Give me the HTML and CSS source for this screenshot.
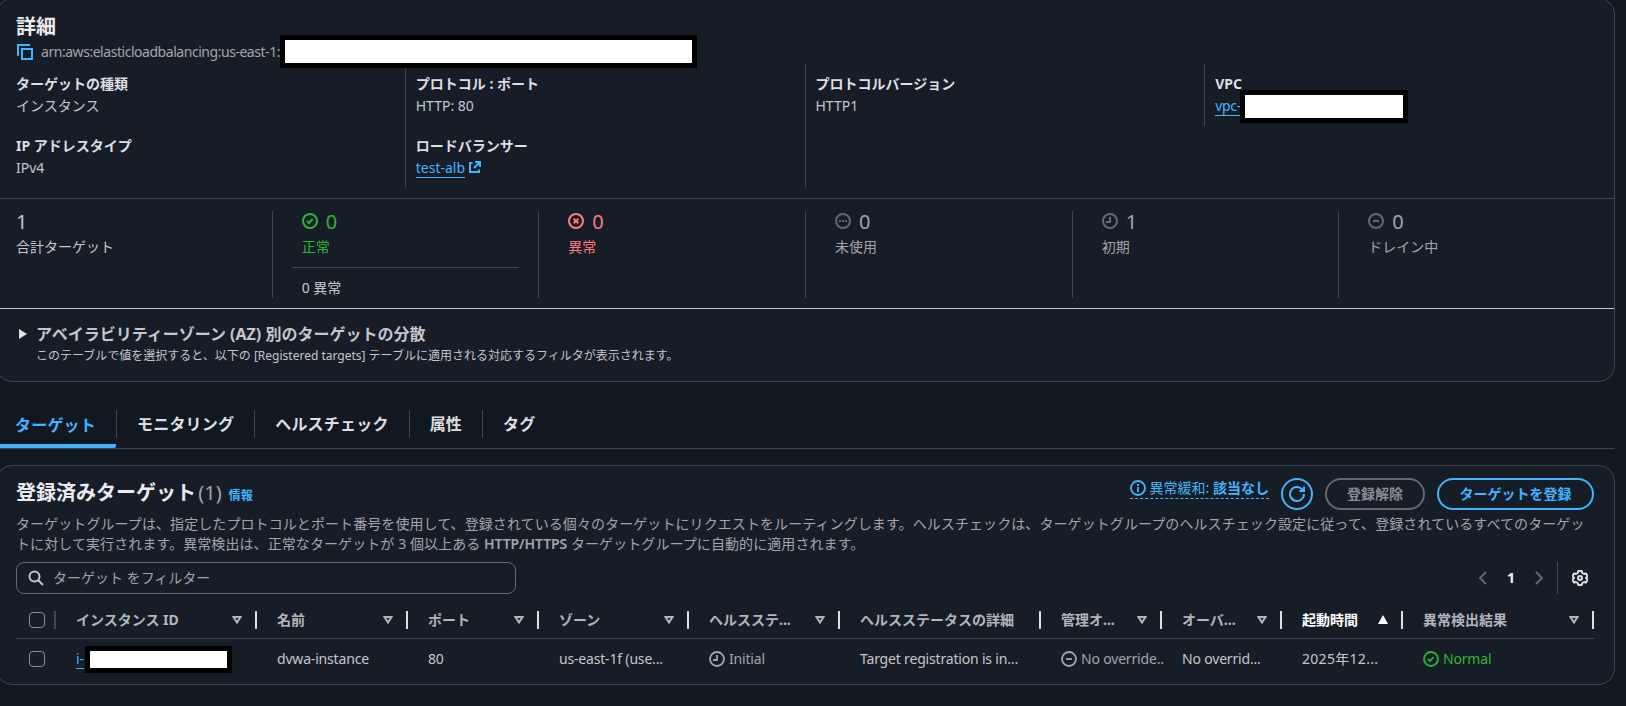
FILE: index.html
```html
<!DOCTYPE html>
<html lang="ja">
<head>
    <meta charset="UTF-8">
    <title>ターゲットグループ</title>
    <link rel="stylesheet" href="styles.css">
</head>
<body>
    <svg class="sprite" width="0" height="0">
        <symbol id="ok" viewBox="0 0 16 16"><circle cx="8" cy="8" r="7"/><path d="M5 8l2 2 3.6-4"/></symbol>
        <symbol id="error" viewBox="0 0 16 16"><circle cx="8" cy="8" r="7"/><path d="M5.7 5.7l4.6 4.6M10.3 5.7l-4.6 4.6"/></symbol>
        <symbol id="unused" viewBox="0 0 16 16"><circle cx="8" cy="8" r="7"/><path d="M4 8h2M7 8h2M10 8h2"/></symbol>
        <symbol id="clock" viewBox="0 0 16 16"><circle cx="8" cy="8" r="7"/><path d="M8 4v5H4"/></symbol>
        <symbol id="minus" viewBox="0 0 16 16"><circle cx="8" cy="8" r="7"/><path d="M5 8h6"/></symbol>
        <symbol id="sort" viewBox="0 0 10 8"><path d="M1.5 1h7L5 6.5z"/></symbol>
    </svg>

    <section class="card details">
        <h2>詳細</h2>
        <div class="arn">
            <svg class="icon" viewBox="0 0 16 16"><path d="M1 12V1h12M5 5h10v10H5z"/></svg>
            <span class="arn-text">arn:aws:elasticloadbalancing:us-east-1:</span>
            <div class="mask mask-arn"></div>
        </div>

        <div class="info-grid">
            <div class="info-col">
                <dl><dt>ターゲットの種類</dt><dd>インスタンス</dd></dl>
                <dl><dt>IP アドレスタイプ</dt><dd>IPv4</dd></dl>
            </div>
            <div class="info-col">
                <dl><dt>プロトコル : ポート</dt><dd>HTTP: 80</dd></dl>
                <dl>
                    <dt>ロードバランサー</dt>
                    <dd><a class="link" href="#">test-alb</a><svg class="ext" viewBox="0 0 12 12"><path d="M3.5 2H1v9h9V8.500M6 1h5v5M11 1L5 7"/></svg></dd>
                </dl>
            </div>
            <div class="info-col">
                <dl><dt>プロトコルバージョン</dt><dd>HTTP1</dd></dl>
            </div>
            <div class="info-col short">
                <dl><dt>VPC</dt><dd class="masked"><a class="link" href="#">vpc-</a><span class="mask mask-vpc"></span></dd></dl>
            </div>
        </div>

        <div class="stats">
            <div class="stat">
                <div class="num">1</div>
                <div class="label">合計ターゲット</div>
            </div>
            <div class="stat green">
                <div class="num"><svg class="icon"><use href="#ok"/></svg>0</div>
                <div class="label">正常</div>
                <div class="sub">0 異常</div>
            </div>
            <div class="stat red">
                <div class="num"><svg class="icon"><use href="#error"/></svg>0</div>
                <div class="label">異常</div>
            </div>
            <div class="stat gray">
                <div class="num"><svg class="icon"><use href="#unused"/></svg>0</div>
                <div class="label">未使用</div>
            </div>
            <div class="stat gray">
                <div class="num"><svg class="icon"><use href="#clock"/></svg>1</div>
                <div class="label">初期</div>
            </div>
            <div class="stat gray">
                <div class="num"><svg class="icon"><use href="#minus"/></svg>0</div>
                <div class="label">ドレイン中</div>
            </div>
        </div>

        <div class="az">
            <div class="az-arrow"></div>
            <div>
                <h3>アベイラビリティーゾーン (AZ) 別のターゲットの分散</h3>
                <p>このテーブルで値を選択すると、以下の [Registered targets] テーブルに適用される対応するフィルタが表示されます。</p>
            </div>
        </div>
    </section>

    <nav class="tabs">
        <a class="tab active" href="#">ターゲット</a>
        <a class="tab" href="#">モニタリング</a>
        <a class="tab" href="#">ヘルスチェック</a>
        <a class="tab" href="#">属性</a>
        <a class="tab" href="#">タグ</a>
    </nav>

    <section class="card targets">
        <div class="head">
            <h2>登録済みターゲット <span class="count">(1)</span><a class="info" href="#">情報</a></h2>
            <div class="actions">
                <div class="mitigation">
                    <svg class="icon" viewBox="0 0 16 16"><circle cx="8" cy="8" r="7"/><path d="M8 7v5M8 4v2"/></svg>
                    <span>異常緩和: <b>該当なし</b></span>
                </div>
                <button class="btn round"><svg class="icon" viewBox="0 0 16 16"><path d="M15 8a7 7 0 1 1-2.200-5.100L14.500 5M15 .5V5h-4.500"/></svg></button>
                <button class="btn disabled">登録解除</button>
                <button class="btn register">ターゲットを登録</button>
            </div>
        </div>
        <p class="desc">ターゲットグループは、指定したプロトコルとポート番号を使用して、登録されている個々のターゲットにリクエストをルーティングします。ヘルスチェックは、ターゲットグループのヘルスチェック設定に従って、登録されているすべてのターゲッ<br>トに対して実行されます。異常検出は、正常なターゲットが 3 個以上ある <span class="http">HTTP/HTTPS</span> ターゲットグループに自動的に適用されます。</p>

        <div class="tools">
            <div class="search">
                <svg class="icon" viewBox="0 0 16 16"><circle cx="6.500" cy="6.500" r="5"/><path d="M10 10l5 5"/></svg>
                <span>ターゲット をフィルター</span>
            </div>
            <div class="pager">
                <svg class="icon dim" viewBox="0 0 16 16"><path d="M11 2L5 8l6 6"/></svg>
                <b>1</b>
                <svg class="icon dim" viewBox="0 0 16 16"><path d="M5 2l6 6-6 6"/></svg>
                <div class="gear">
                    <svg class="icon" viewBox="0 0 16 16"><path d="M6.300 1h3.400l.6 2 1.700 1 2-.5L15.500 6.300 14 8l1.500 1.700L14 12.500l-2-.5-1.700 1-.6 2H6.300l-.6-2L4 12l-2 .5L.5 9.700 2 8 .5 6.300 2 3.500 4 4l1.700-1z"/><circle cx="8" cy="8" r="2"/></svg>
                </div>
            </div>
        </div>

        <div class="table">
            <div class="row header">
                <div class="cell check"><i class="box"></i></div>
                <div class="cell">インスタンス ID<svg class="sort"><use href="#sort"/></svg></div>
                <div class="cell">名前<svg class="sort"><use href="#sort"/></svg></div>
                <div class="cell">ポート<svg class="sort"><use href="#sort"/></svg></div>
                <div class="cell">ゾーン<svg class="sort"><use href="#sort"/></svg></div>
                <div class="cell">ヘルスステ...<svg class="sort"><use href="#sort"/></svg></div>
                <div class="cell">ヘルスステータスの詳細</div>
                <div class="cell">管理オ...<svg class="sort"><use href="#sort"/></svg></div>
                <div class="cell">オーバ...<svg class="sort"><use href="#sort"/></svg></div>
                <div class="cell sorted">起動時間<i class="asc"></i></div>
                <div class="cell">異常検出結果<svg class="sort"><use href="#sort"/></svg></div>
            </div>
            <div class="row">
                <div class="cell check"><i class="box"></i></div>
                <div class="cell masked"><a class="link" href="#">i-</a><span class="mask mask-id"></span></div>
                <div class="cell">dvwa-instance</div>
                <div class="cell">80</div>
                <div class="cell">us-east-1f (use...</div>
                <div class="cell muted"><svg class="icon"><use href="#clock"/></svg>Initial</div>
                <div class="cell">Target registration is in...</div>
                <div class="cell muted"><svg class="icon"><use href="#minus"/></svg>No override..</div>
                <div class="cell">No overrid...</div>
                <div class="cell date">2025年12...</div>
                <div class="cell green"><svg class="icon"><use href="#ok"/></svg>Normal</div>
            </div>
        </div>
    </section>
</body>
</html>
```
FILE: styles.css
```css
* {
    box-sizing: border-box;
}
body {
    margin: 0;
    height: 706px;
    overflow: hidden;
    background: #12181f;
    color: #c6c6cd;
    font-family: "Noto Sans", "Noto Sans CJK JP", sans-serif;
    font-size: 14px;
    line-height: 20px;
}
h2, h3, p, dl, dd {
    margin: 0;
}
a {
    text-decoration: none;
}
.sprite {
    display: block;
    height: 0;
}
.icon {
    width: 16px;
    height: 16px;
    flex: none;
    fill: none;
    stroke: currentColor;
    stroke-width: 2;
}
.card {
    width: 1619px;
    margin-left: -4px;
    background: #161d26;
    border: 1px solid #424650;
    border-radius: 16px;
}
.details {
    height: 384px;
    margin-top: -2px;
}
h2 {
    font-size: 20px;
    line-height: 24px;
    color: #ebebf0;
}

/* details */
.details h2 {
    padding: 16px 19px 0;
}
.arn {
    position: relative;
    display: flex;
    align-items: center;
    gap: 8px;
    height: 24px;
    margin: 1px 20px 0;
    color: #a4a4ad;
}
.arn-text {
    letter-spacing: -0.46px;
}
.arn .icon {
    color: #42b4ff;
}
.mask {
    position: absolute;
    background: #fff;
    border: 5px solid #000;
    z-index: 1;
}
.mask-arn {
    left: 263px;
    top: -5px;
    width: 417px;
    height: 33px;
}
.mask-vpc {
    left: 25px;
    top: -5px;
    width: 168px;
    height: 33px;
}
.mask-id {
    left: 29px;
    top: 7px;
    width: 147px;
    height: 27px;
}
.masked {
    position: relative;
}
.info-grid {
    display: grid;
    grid-template-columns: repeat(4, 1fr);
    align-items: start;
    margin: 0 10px 0 8px;
}
.info-col {
    height: 124px;
    padding-left: 10px;
}
.info-col:first-child {
    padding-left: 11px;
}
.info-col + .info-col {
    border-left: 1px solid #424650;
}
.info-col.short {
    height: 62px;
}
dl {
    height: 62px;
    padding-top: 9px;
    line-height: 22px;
}
dt {
    font-weight: bold;
    color: #dedee3;
}
.link {
    color: #42b4ff;
    border-bottom: 1px solid #42b4ff;
    line-height: 18px;
}
dd .link {
    display: inline-block;
}
.masked .link {
    letter-spacing: -0.3px;
}
.ext {
    width: 12px;
    height: 12px;
    margin-left: 4px;
    fill: none;
    stroke: #42b4ff;
    stroke-width: 2;
}
.stats {
    display: grid;
    grid-template-columns: repeat(6, 1fr);
    height: 110px;
    margin-top: 10px;
    padding: 12px 9px 10px 8px;
    border-top: 1px solid #424650;
}
.stat {
    padding: 0 11px;
}
.stat + .stat {
    padding: 0 19px;
    border-left: 1px solid #424650;
}
.num {
    display: flex;
    align-items: center;
    gap: 8px;
    height: 22px;
    font-size: 20px;
}
.num .icon {
    margin-top: -2px;
}
.label {
    height: 27px;
    line-height: 27px;
}
.stat + .stat .num, .stat + .stat .label {
    padding-left: 10px;
}
.sub {
    margin-top: 7px;
    padding: 10px 10px 0;
    border-top: 1px solid #424650;
    color: #c6c6cd;
}
.green { color: #2bb534; }
.red { color: #ff7a7a; }
.gray { color: #a4a4ad; }
.gray .icon { color: #656871; }
.az {
    display: flex;
    height: 73px;
    padding: 14px 19px 0 22px;
    border-top: 1px solid #c6c6cd;
}
.az-arrow {
    margin: 6px 9px 0 0;
    width: 8px;
    height: 10px;
    background: #dedee3;
    clip-path: polygon(0 0, 100% 50%, 0 100%);
}
h3 {
    font-size: 16px;
    line-height: 23px;
}
.az p {
    font-size: 12px;
}

/* tabs */
.tabs {
    display: flex;
    align-items: center;
    width: 1615px;
    height: 67px;
    padding-top: 18px;
    border-bottom: 1px solid #424650;
}
.tab {
    padding: 0 20px;
    border-left: 1px solid #424650;
    font-size: 16px;
    font-weight: bold;
    line-height: 28px;
    letter-spacing: 0.2px;
    color: #dedee3;
}
.tab.active {
    align-self: flex-end;
    height: 37px;
    padding-left: 15px;
    border-left: 0;
    border-bottom: 4px solid #42b4ff;
    border-radius: 0 0 2px 0;
    color: #42b4ff;
}

/* registered targets */
.targets {
    height: 220px;
    margin-top: 16px;
    padding: 12px 20px 0 19px;
}
.head {
    display: flex;
    justify-content: space-between;
    height: 36px;
}
.head h2 {
    padding-top: 3px;
}
.count {
    margin-left: -3px;
    font-weight: normal;
    color: #a4a4ad;
}
.info {
    margin-left: 7px;
    font-size: 12px;
    color: #42b4ff;
}
.actions {
    display: flex;
    gap: 12px;
}
.mitigation {
    display: flex;
    align-items: center;
    gap: 4px;
    height: 21px;
    border-bottom: 1px dashed #42b4ff;
    color: #42b4ff;
}
.mitigation .icon {
    stroke-width: 1.8;
}
.btn {
    height: 32px;
    padding: 0 20px;
    background: none;
    border: 2px solid #42b4ff;
    border-radius: 16px;
    color: #42b4ff;
    font: bold 14px/20px "Noto Sans", "Noto Sans CJK JP", sans-serif;
}
.btn.round {
    display: flex;
    align-items: center;
    justify-content: center;
    width: 32px;
    padding: 0;
}
.btn.register {
    width: 157px;
    padding: 0 19px;
}
.btn.disabled {
    border-color: #656871;
    color: #8c8c94;
}
.desc {
    letter-spacing: 0.083px;
    white-space: nowrap;
    color: #a4a4ad;
}
.http {
    font-weight: 600;
    letter-spacing: -0.1px;
}
.tools {
    display: flex;
    justify-content: space-between;
    height: 32px;
    margin-top: 8px;
}
.search {
    display: flex;
    align-items: center;
    gap: 9px;
    width: 500px;
    padding-left: 11px;
    border: 1px solid #656871;
    border-radius: 8px;
    color: #a4a4ad;
}
.search .icon {
    color: #c6c6cd;
}
.pager {
    display: flex;
    align-items: center;
    color: #fff;
}
.pager b {
    width: 40px;
    text-align: center;
}
.dim {
    color: #656871;
}
.gear {
    display: flex;
    align-items: center;
    height: 32px;
    margin-left: 10px;
    padding: 0 6px 0 14px;
    border-left: 1px solid #424650;
    color: #dedee3;
}
.gear .icon {
    stroke-linejoin: round;
}
.row {
    display: grid;
    grid-template-columns: 40px 201px 151px 131px 150px 151px 201px 121px 120px 121px 191px;
    height: 40px;
    letter-spacing: -0.18px;
}
.header {
    height: 45px;
    padding-top: 7px;
    border-bottom: 1px solid #424650;
    font-weight: bold;
    letter-spacing: 0;
    color: #b4b4bb;
}
.cell {
    display: flex;
    align-items: center;
    padding-left: 20px;
    white-space: nowrap;
}
.header .cell {
    position: relative;
    justify-content: space-between;
    padding-right: 15px;
}
.header .cell::after {
    content: "";
    position: absolute;
    right: 0;
    top: 10px;
    width: 2px;
    height: 18px;
    background: #dedee3;
}
.header .check::after {
    background: #424650;
}
.row .check {
    padding: 0 0 0 13px;
}
.box {
    width: 16px;
    height: 16px;
    border: 1px solid #8c8c94;
    border-radius: 4px;
}
.sort {
    width: 10px;
    height: 8px;
    fill: none;
    stroke: #b4b4bb;
    stroke-width: 2;
}
.asc {
    width: 10px;
    height: 9px;
    background: #fff;
    clip-path: polygon(50% 0, 100% 100%, 0 100%);
}
.sorted {
    color: #fff;
}
.date {
    letter-spacing: 0.3px;
}
.muted {
    color: #a4a4ad;
}
.row .icon {
    margin-right: 4px;
    stroke-width: 1.8;
}
```
